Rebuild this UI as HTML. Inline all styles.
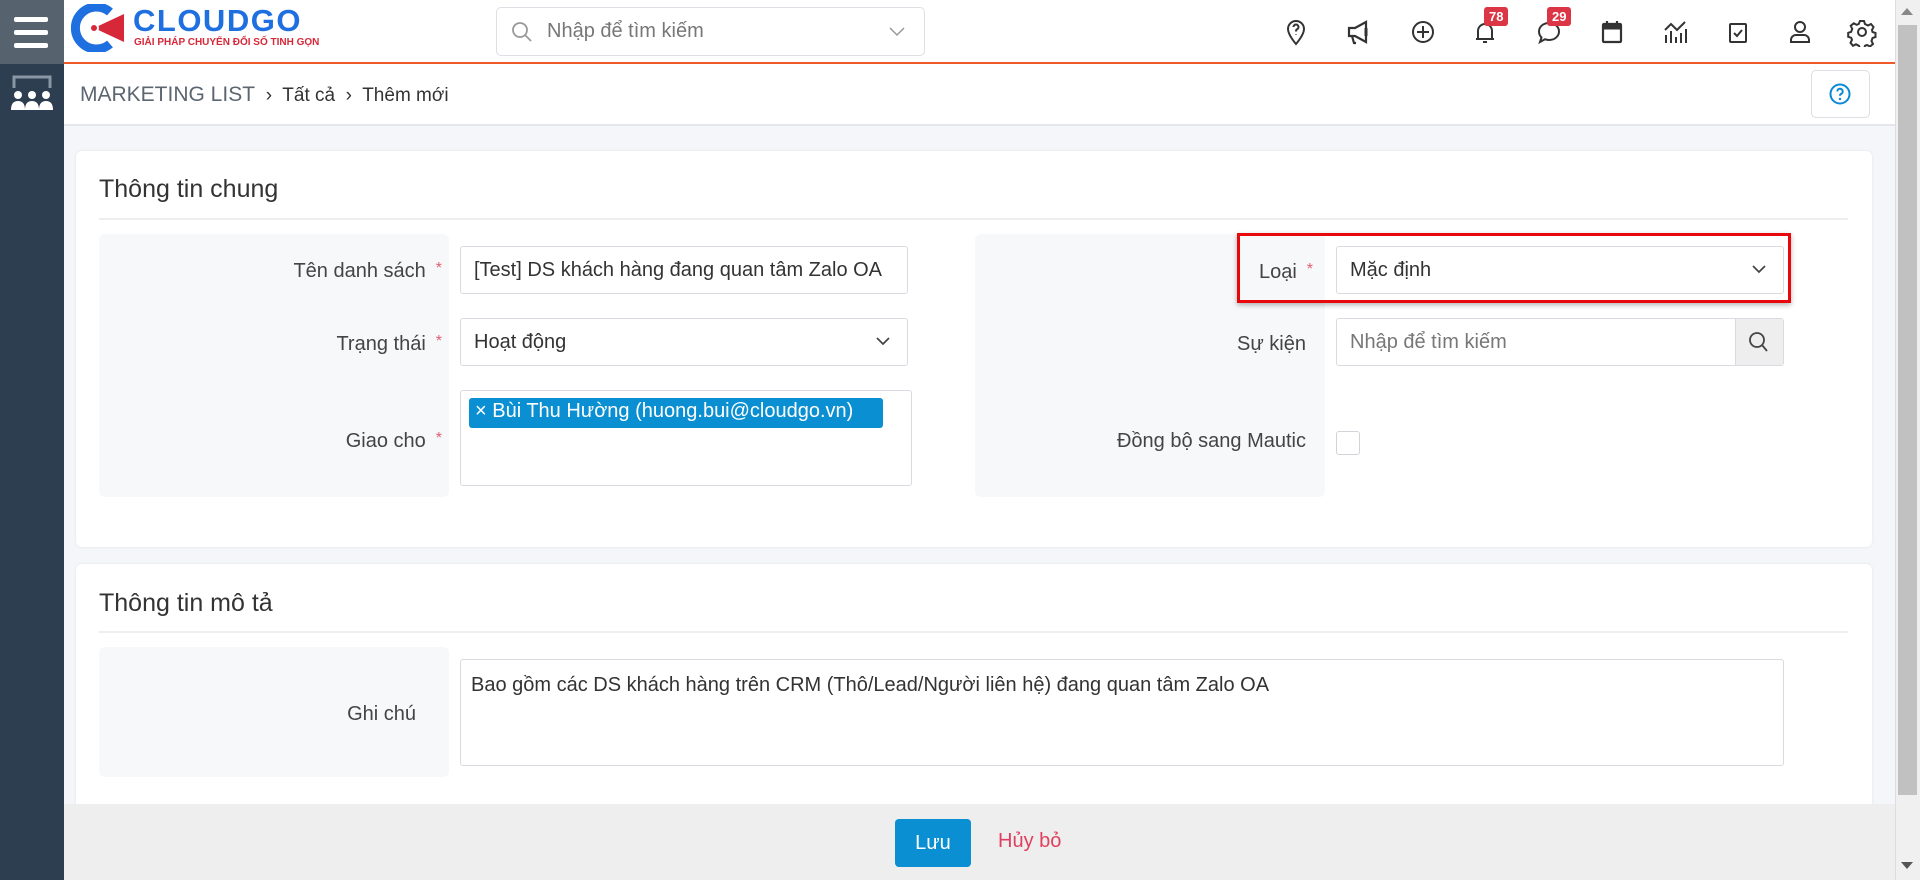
<!DOCTYPE html>
<html><head><meta charset="utf-8"><style>
*{box-sizing:border-box;margin:0;padding:0}
body{width:1920px;height:880px;overflow:hidden;background:#f4f6f9;font-family:"Liberation Sans",sans-serif;color:#333;position:relative}
.abs{position:absolute}
.side{left:0;top:0;width:64px;height:880px;background:#2c3e50}
.side .top{position:absolute;left:0;top:0;width:64px;height:64px;background:#56636f}
.hdr{left:64px;top:0;width:1831px;height:64px;background:#fff;border-bottom:2px solid #f05a28}
.bc{left:64px;top:64px;width:1831px;height:62px;background:#fff;border-bottom:2px solid #e3e6ea}
.card{background:#fff;border-radius:6px;box-shadow:0 0 3px rgba(0,0,0,.08)}
.lbox{background:#f7f8fa;border-radius:6px}
.lbl{font-size:20px;color:#444;text-align:right}
.req{color:#e06070;font-size:16px;margin-left:10px;vertical-align:top}
.inp{background:#fff;border:1px solid #d8dbe0;border-radius:3px;font-size:20px;color:#333;padding-left:13px;display:flex;align-items:center}
.ttl{font-size:25px;color:#333}
.hr{height:2px;background:#eceef0}
.ic{top:17px;width:30px;height:30px}
.badge{background:#dc3545;color:#fff;font-size:13px;font-weight:bold;border-radius:3px;padding:2px 5px;top:7px}
</style></head><body>
<div class="abs side"><div class="top">
<div style="position:absolute;left:14px;top:17px;width:34px;height:5px;background:#fff;border-radius:2px"></div>
<div style="position:absolute;left:14px;top:30px;width:34px;height:5px;background:#fff;border-radius:2px"></div>
<div style="position:absolute;left:14px;top:43px;width:34px;height:5px;background:#fff;border-radius:2px"></div>
</div>
<svg style="position:absolute;left:8px;top:74px" width="48" height="40" viewBox="0 0 48 40"><path d="M6 14V3h36v11" fill="none" stroke="#8a96a3" stroke-width="3"/><g fill="#fff"><circle cx="10" cy="21" r="4"/><circle cx="24" cy="21" r="4"/><circle cx="38" cy="21" r="4"/><path d="M3 36q0-9 7-9t7 9zM17 36q0-9 7-9t7 9zM31 36q0-9 7-9t7 9z"/></g></svg>
</div>
<div class="abs hdr"></div>
<svg class="abs" style="left:70px;top:4px" width="56" height="48" viewBox="0 0 56 48"><path d="M40 8A21 21 0 1 0 40 40" fill="none" stroke="#1e6fe0" stroke-width="9"/><path d="M24 24L54 10V38Z" fill="#d62839"/><circle cx="24" cy="24" r="5" fill="#fff"/><circle cx="24" cy="24" r="3" fill="#d62839"/></svg>
<div class="abs" style="left:133px;top:3px;font-size:31px;font-weight:bold;color:#1e6fe0;letter-spacing:1.5px">CLOUDGO</div>
<div class="abs" style="left:134px;top:37px;font-size:10px;font-weight:bold;color:#d62839">GIẢI PHÁP CHUYỂN ĐỔI SỐ TINH GỌN</div>
<div class="abs" style="left:496px;top:7px;width:429px;height:49px;border:1px solid #dcdfe3;border-radius:5px;background:#fff"></div>
<svg class="abs" style="left:510px;top:20px" width="24" height="24" viewBox="0 0 24 24"><circle cx="10" cy="10" r="7" fill="none" stroke="#999" stroke-width="1.8"/><path d="M15 15l6 6" stroke="#999" stroke-width="1.8"/></svg>
<div class="abs" style="left:547px;top:20px;font-size:20px;color:#777">Nhập để tìm kiếm</div>
<svg class="abs" style="left:888px;top:24px" width="18" height="14" viewBox="0 0 18 14"><path d="M2 4l7 7 7-7" fill="none" stroke="#999" stroke-width="1.5"/></svg>
<svg class="abs ic" style="left:1281px" viewBox="0 0 30 30" fill="none" stroke="#333" stroke-width="2"><path d="M15 27s-8-9-8-15a8 8 0 0 1 16 0c0 6-8 15-8 15z"/><path d="M12.5 10a2.5 2.5 0 1 1 3.5 2.3c-1 .5-1 1.2-1 2.2M15 17v.5"/></svg>
<svg class="abs ic" style="left:1344px" viewBox="0 0 30 30" fill="none" stroke="#333" stroke-width="2.2"><path d="M5 11h6l11-6v20l-11-6H5z"/><path d="M8 19l2 7h2"/><path d="M22 11v8" stroke-width="3"/></svg>
<svg class="abs ic" style="left:1408px" viewBox="0 0 30 30" fill="none" stroke="#333" stroke-width="2"><circle cx="15" cy="15" r="10"/><path d="M15 9v12M9 15h12"/></svg>
<svg class="abs ic" style="left:1470px" viewBox="0 0 30 30" fill="none" stroke="#333" stroke-width="2"><path d="M8 22V14a7 7 0 0 1 14 0v8M6 22h18M13 25h4M15 5v2"/></svg>
<svg class="abs ic" style="left:1534px" viewBox="0 0 30 30" fill="none" stroke="#333" stroke-width="2"><path d="M15 6c6 0 10 4 10 8.5S21 23 15 23c-1.5 0-3-.3-4-.8L6 25l1.5-4.5C6 19 5 17 5 14.5 5 10 9 6 15 6z"/></svg>
<svg class="abs ic" style="left:1597px" viewBox="0 0 30 30" fill="none" stroke="#333" stroke-width="2.2"><rect x="6" y="7" width="18" height="18" rx="1"/><path d="M6 10h18" stroke-width="5"/><path d="M10 4v4M20 4v4"/></svg>
<svg class="abs ic" style="left:1660px" viewBox="0 0 30 30" fill="none" stroke="#333" stroke-width="2"><path d="M5 13l6-6 6 6 8-8M6 18v8M11 14v12M16 20v6M21 16v10M26 12v14"/></svg>
<svg class="abs ic" style="left:1723px" viewBox="0 0 30 30" fill="none" stroke="#333" stroke-width="2"><rect x="7" y="7" width="16" height="18" rx="1"/><path d="M11 16l3 3 5-6"/></svg>
<svg class="abs ic" style="left:1785px" viewBox="0 0 30 30" fill="none" stroke="#333" stroke-width="2"><circle cx="15" cy="10" r="5"/><path d="M6 25v-2a5 5 0 0 1 5-5h8a5 5 0 0 1 5 5v2z"/></svg>
<svg class="abs ic" style="left:1847px" viewBox="0 0 30 30" fill="none" stroke="#333" stroke-width="2"><circle cx="15" cy="15" r="4"/><path d="M13 4h4l1 3 3 1.5 3-1.5 2.5 3-1.5 3 .5 2 3 1v4l-3 1-1 3 1.5 3-3 2.5-3-1.5-2 .8-1 3h-4l-1-3-3-1.5-3 1.5-2.5-3 1.5-3-.8-2-3-1v-4l3-1 1-3-1.5-3 3-2.5 3 1.5 2-.8z"/></svg>
<div class="abs badge" style="left:1484px">78</div>
<div class="abs badge" style="left:1547px">29</div>
<div class="abs bc"></div>
<div class="abs" style="left:80px;top:83px;font-size:21px;color:#5c6670">MARKETING LIST <span style="color:#333;font-size:19px">&nbsp;›&nbsp; Tất cả &nbsp;›&nbsp; Thêm mới</span></div>
<div class="abs" style="left:1811px;top:70px;width:59px;height:48px;border:1px solid #dcdfe3;border-radius:5px;background:#fff"></div>
<svg class="abs" style="left:1828px;top:82px" width="24" height="24" viewBox="0 0 24 24"><circle cx="12" cy="12" r="9.5" fill="none" stroke="#0a8ad6" stroke-width="2"/><path d="M9.3 9.5a2.7 2.7 0 1 1 3.6 2.5c-.8.4-.9 1-.9 1.8" fill="none" stroke="#0a8ad6" stroke-width="2"/><circle cx="12" cy="17" r="1.2" fill="#0a8ad6"/></svg>

<div class="abs card" style="left:76px;top:151px;width:1796px;height:396px"></div>
<div class="abs ttl" style="left:99px;top:175px">Thông tin chung</div>
<div class="abs hr" style="left:99px;top:218px;width:1749px"></div>
<div class="abs lbox" style="left:99px;top:234px;width:350px;height:263px"></div>
<div class="abs lbox" style="left:975px;top:234px;width:350px;height:263px"></div>
<div class="abs lbl" style="left:100px;top:260px;width:342px">Tên danh sách<span class="req">*</span></div>
<div class="abs lbl" style="left:100px;top:333px;width:342px">Trạng thái<span class="req">*</span></div>
<div class="abs lbl" style="left:100px;top:430px;width:342px">Giao cho<span class="req">*</span></div>
<div class="abs inp" style="left:460px;top:246px;width:448px;height:48px">[Test] DS khách hàng đang quan tâm Zalo OA</div>
<div class="abs inp" style="left:460px;top:318px;width:448px;height:48px">Hoạt động</div>
<svg class="abs" style="left:875px;top:335px" width="16" height="12" viewBox="0 0 16 12"><path d="M2 3l6 6 6-6" fill="none" stroke="#444" stroke-width="1.7"/></svg>
<div class="abs inp" style="left:460px;top:390px;width:452px;height:96px"></div>
<div class="abs" style="left:469px;top:398px;width:414px;height:30px;background:#0a8fd2;color:#fff;border-radius:3px;font-size:20px;padding:2px 0 0 6px">× Bùi Thu Hường (huong.bui@cloudgo.vn)</div>

<div class="abs lbl" style="left:976px;top:261px;width:337px">Loại<span class="req">*</span></div>
<div class="abs lbl" style="left:976px;top:333px;width:330px">Sự kiện</div>
<div class="abs lbl" style="left:976px;top:430px;width:330px">Đồng bộ sang Mautic</div>
<div class="abs inp" style="left:1336px;top:246px;width:448px;height:48px">Mặc định</div>
<svg class="abs" style="left:1751px;top:263px" width="16" height="12" viewBox="0 0 16 12"><path d="M2 3l6 6 6-6" fill="none" stroke="#444" stroke-width="1.7"/></svg>
<div class="abs" style="left:1237px;top:233px;width:554px;height:70px;border:3px solid #e8080c;box-shadow:0 2px 5px rgba(0,0,0,.3)"></div>
<div class="abs inp" style="left:1336px;top:318px;width:448px;height:48px;color:#777">Nhập để tìm kiếm</div>
<div class="abs" style="left:1735px;top:319px;width:48px;height:46px;background:#eee;border-left:1px solid #d8dbe0"></div>
<svg class="abs" style="left:1747px;top:330px" width="24" height="24" viewBox="0 0 24 24"><circle cx="10" cy="10" r="7" fill="none" stroke="#444" stroke-width="1.8"/><path d="M15 15l5 6" stroke="#444" stroke-width="1.8"/></svg>
<div class="abs" style="left:1336px;top:431px;width:24px;height:24px;border:1px solid #d0d3d8;border-radius:3px;background:#fff"></div>

<div class="abs card" style="left:76px;top:564px;width:1796px;height:260px"></div>
<div class="abs ttl" style="left:99px;top:589px">Thông tin mô tả</div>
<div class="abs hr" style="left:99px;top:631px;width:1749px"></div>
<div class="abs lbox" style="left:99px;top:647px;width:350px;height:130px"></div>
<div class="abs lbl" style="left:100px;top:703px;width:316px">Ghi chú</div>
<div class="abs inp" style="left:460px;top:659px;width:1324px;height:107px;align-items:flex-start;padding-top:14px;padding-left:10px">Bao gồm các DS khách hàng trên CRM (Thô/Lead/Người liên hệ) đang quan tâm Zalo OA</div>

<div class="abs" style="left:64px;top:804px;width:1831px;height:76px;background:#eee"></div>
<div class="abs" style="left:895px;top:819px;width:76px;height:48px;background:#0a8fd2;border-radius:4px;color:#fff;font-size:20px;text-align:center;line-height:48px">Lưu</div>
<div class="abs" style="left:998px;top:830px;font-size:20px;color:#e0405f">Hủy bỏ</div>
<div class="abs" style="left:1895px;top:0;width:25px;height:880px;background:#f0f0f0;border-left:1px solid #ddd"></div>
<div class="abs" style="left:1898px;top:25px;width:19px;height:770px;background:#c1c1c1"></div>
<div class="abs" style="left:1901px;top:8px;width:0;height:0;border-left:6px solid transparent;border-right:6px solid transparent;border-bottom:7px solid #888"></div>
<div class="abs" style="left:1901px;top:862px;width:0;height:0;border-left:6px solid transparent;border-right:6px solid transparent;border-top:7px solid #555"></div>
</body></html>
